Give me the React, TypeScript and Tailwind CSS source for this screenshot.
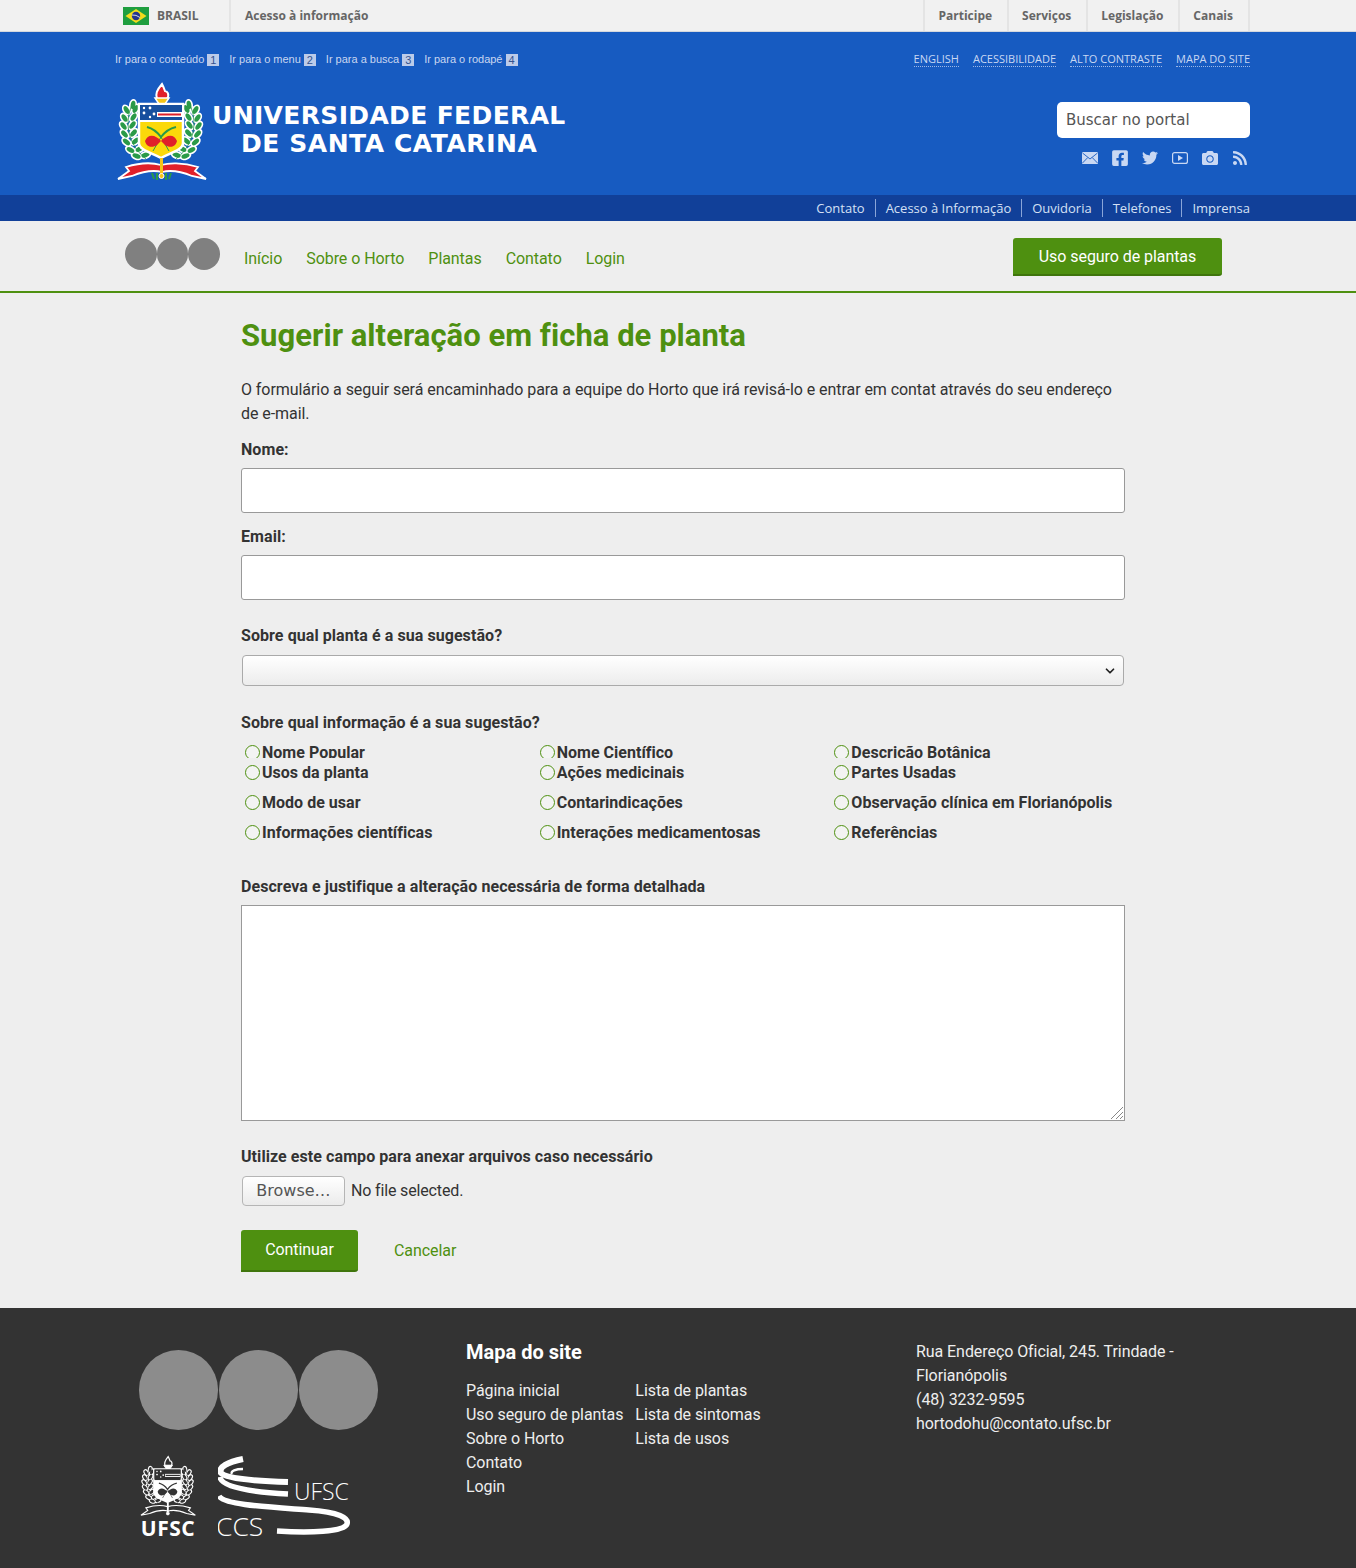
import { FaCamera, FaFacebookSquare, FaRss, FaTwitter } from "react-icons/fa";
import { FiChevronDown } from "react-icons/fi";

const roboto = "font-['Roboto',sans-serif]";
const openSans = "font-['Open_Sans',sans-serif]";

const skipLinks = [
  ["Ir para o conteúdo", "1"],
  ["Ir para o menu", "2"],
  ["Ir para a busca", "3"],
  ["Ir para o rodapé", "4"],
];

const radios = [
  "Nome Popular",
  "Nome Científico",
  "Descricão Botânica",
  "Usos da planta",
  "Ações medicinais",
  "Partes Usadas",
  "Modo de usar",
  "Contarindicações",
  "Observação clínica em Florianópolis",
  "Informações científicas",
  "Interações medicamentosas",
  "Referências",
];

function Flag() {
  return (
    <svg width="26" height="18" viewBox="0 0 26 18">
      <rect width="26" height="18" fill="#1f9e3f" />
      <path d="M13 2 L23.5 9 L13 16 L2.5 9 Z" fill="#f4dc1c" />
      <circle cx="13" cy="9" r="4.2" fill="#24358c" />
      <path d="M9 8 Q13 7.5 17 10.5" stroke="#fff" strokeWidth="0.8" fill="none" />
    </svg>
  );
}

// stem points of the left wreath, the right one is mirrored
const stem = [
  [21, 35, 30],
  [19, 43, 32],
  [18, 51, 36],
  [19, 59, 42],
  [21, 67, 50],
  [25, 75, 60],
  [31, 81, 70],
];

function Wreath({ leaf, flip }: { leaf: string; flip?: boolean }) {
  const leaves: number[][] = [[23, 30, 10]];
  stem.forEach(([x, y, r]) => {
    leaves.push([x - 4.5, y, -r]);
    leaves.push([x + 4.5, y - 1, r]);
  });
  return (
    <g transform={flip ? "translate(102 0) scale(-1 1)" : undefined}>
      {leaves.map(([x, y, r]) => (
        <ellipse key={`w${x}-${y}`} cx={x} cy={y} rx="4" ry="6" fill="#fff" transform={`rotate(${r} ${x} ${y})`} />
      ))}
      <path d="M22 30 C15 45 16 68 36 84" stroke={leaf} strokeWidth="0.8" fill="none" />
      {leaves.map(([x, y, r]) => (
        <ellipse key={`l${x}-${y}`} cx={x} cy={y} rx="2.3" ry="4.2" fill={leaf} transform={`rotate(${r} ${x} ${y})`} />
      ))}
    </g>
  );
}

function Crest({ mono, size = 110 }: { mono?: boolean; size?: number }) {
  const green = mono ? "#333" : "#2a9a48";
  const blue = mono ? "#333" : "#174f9e";
  const yellow = mono ? "#fff" : "#fbd90a";
  const red = mono ? "#333" : "#e0202a";
  return (
    <svg width={size} height={size} viewBox="0 0 110 110">
      <Wreath leaf={green} />
      <Wreath leaf={green} flip />
      {/* torch */}
      <path d="M52 9 C47 15 45 19 47 24 L57 24 C60 19 57 16 55 16 C54 13 53 11 52 9 Z" fill={red} stroke="#fff" strokeWidth="2" />
      <path d="M45 23 L59 23 L55 29 L49 29 Z" fill={mono ? "#fff" : "#f5c518"} stroke="#fff" strokeWidth="1.5" />
      {/* shield */}
      <path d="M29 29 L73 29 L73 68 C73 75 60 78 51 83 C42 78 29 75 29 68 Z" fill={yellow} stroke="#fff" strokeWidth="2.5" />
      <rect x="30" y="30" width="42" height="17" fill={mono ? "#333" : "#fff"} />
      <rect x="30" y="30" width="42" height="15" fill={blue} />
      <rect x="47" y="37" width="25" height="5" fill="#fff" />
      <rect x="48" y="38.5" width="23" height="2" fill={red} />
      <circle cx="34" cy="38" r="1.4" fill="#fff" />
      <circle cx="40" cy="33" r="1.4" fill="#fff" />
      <circle cx="34" cy="33" r="1.2" fill="#fff" />
      <circle cx="44" cy="39" r="1.4" fill="#fff" />
      <circle cx="40" cy="42" r="1.2" fill="#fff" />
      {/* arms */}
      <path d="M37 52 Q45 54 51 62 Q57 54 66 52" stroke={green} strokeWidth="2" fill="none" />
      <path d="M51 62 L43 76 M51 62 L59 76" stroke={green} strokeWidth="1" fill="none" />
      <path d="M35 66 C38 58 46 60 51 66 C56 60 64 58 67 66 C65 74 58 72 55 70 L51 66 L47 70 C44 72 37 74 35 66 Z" fill={red} />
      {/* ribbon */}
      <path d="M8 104 L19 96 L16 92 C32 87 44 88 51 90 C58 88 72 87 88 92 L85 96 L96 104 L82 101 C70 96 60 95 52 97 C44 95 34 96 22 101 Z" fill={red} stroke="#fff" strokeWidth="1.8" />
      <rect x="50" y="83" width="3" height="16" fill={mono ? "#fff" : "#f5c518"} />
      <circle cx="51.5" cy="101" r="2.5" fill={mono ? "#fff" : "#f5c518"} stroke="#fff" />
      <path d="M42 98 L44 104 M47 98 L47 105 M56 98 L56 105 M61 98 L59 104" stroke={green} strokeWidth="2" />
    </svg>
  );
}

function MailIcon() {
  return (
    <svg width="16" height="12" viewBox="0 0 16 12" fill="none">
      <rect width="16" height="12" rx="1" fill="#c9d8f3" />
      <path d="M0.5 1 L8 7 L15.5 1 M0.5 11 L5.8 5.5 M15.5 11 L10.2 5.5" stroke="#175bc1" strokeWidth="0.9" />
    </svg>
  );
}

function PlayIcon() {
  return (
    <svg width="16" height="12" viewBox="0 0 16 12" fill="none">
      <rect x="0.6" y="0.6" width="14.8" height="10.8" rx="2" stroke="#c9d8f3" strokeWidth="1.2" />
      <path d="M6 3 L11 6 L6 9 Z" fill="#c9d8f3" />
    </svg>
  );
}

function FormLabel({ children }: { children: React.ReactNode }) {
  return <div className="text-[16px] leading-6 font-bold text-[#333] tracking-[0.07px]">{children}</div>;
}

function FooterLogo() {
  return (
    <div className="flex items-start mt-[21px] -ml-px">
      <div className="w-[64px] flex flex-col items-center">
        <Crest mono size={68} />
        <span className="-mt-[2px] -ml-[4px] text-white text-[21px] leading-[22px] font-bold font-['Open_Sans',sans-serif] tracking-[0.5px]">UFSC</span>
      </div>
      <svg width="150" height="84" viewBox="0 0 150 84" className="ml-[16px] mt-[5px]" fill="none" stroke="#fff">
        <path d="M25 3 C10 6 0 11 3 17 C7 22 33 25 70 26" strokeWidth="6" />
        <path d="M25 13 C18 13 12 15 14 18" strokeWidth="2.5" />
        <path d="M2 21 C3 31 31 36 70 38" strokeWidth="5.5" />
        <path d="M1 40 C6 49 51 51 91 54 C121 56 131 62 129 68 C126 76 91 77 59 75" strokeWidth="5.5" />
        <text x="76" y="44" fill="#fff" stroke="none" fontSize="23" fontWeight="300" fontFamily="Open Sans, sans-serif">UFSC</text>
        <text x="-2" y="80" fill="#fff" stroke="none" fontSize="26.5" fontWeight="300" fontFamily="Open Sans, sans-serif">CCS</text>
      </svg>
    </div>
  );
}

export default function App() {
  return (
    <div className={`${roboto} bg-[#eeeeee] text-[#333] w-full tracking-[-0.065px]`}>
      {/* barra brasil */}
      <div className={`${openSans} h-[32px] bg-[#f1f1f1] border-b border-[#d4d8de] text-[12px] font-bold text-[#666] tracking-normal`}>
        <div className="flex h-full items-stretch pl-[123px] pr-[106px]">
          <div className="flex items-center w-[108px] border-r-2 border-[#e4e4e4]">
            <Flag />
            <span className="ml-2">BRASIL</span>
          </div>
          <span className="ml-[14px] flex items-center">Acesso à informação</span>
          <div className="ml-auto flex border-r-2 border-[#e4e4e4]">
            {["Participe", "Serviços", "Legislação", "Canais"].map((t) => (
              <span key={t} className="flex items-center pl-[13px] pr-[15px] border-l-2 border-[#e4e4e4]">
                {t}
              </span>
            ))}
          </div>
        </div>
      </div>

      {/* header azul */}
      <div className="h-[163px] bg-[#175bc1] tracking-normal">
        <div className="pl-[115px] pr-[106px]">
          <div className="flex items-center justify-between pt-[15px] h-[40px]">
            <div className="flex gap-[10px] font-['Liberation_Sans',sans-serif] text-[11px] text-[#c9d6f0]">
              {skipLinks.map(([label, n]) => (
                <span key={n} className="flex items-center gap-[3px]">
                  {label}
                  <span className="bg-[#bccbe9] text-[#34528e] w-[12px] h-[12px] leading-[12px] text-center">{n}</span>
                </span>
              ))}
            </div>
            <div className={`${openSans} flex gap-[14px] text-[11px] text-[#c9d8f3]`}>
              {["ENGLISH", "ACESSIBILIDADE", "ALTO CONTRASTE", "MAPA DO SITE"].map((t) => (
                <span key={t} className="border-b border-dotted border-[#9db8e6] leading-[14px]">
                  {t}
                </span>
              ))}
            </div>
          </div>
          <div className="flex justify-between">
            <div className="flex -ml-[5px] mt-[3px]">
              <Crest />
              <div className="ml-[-8px] mt-[27px] font-['DejaVu_Sans',sans-serif] font-bold text-white text-[25px] leading-[28px]">
                <div className="tracking-[0.35px]">UNIVERSIDADE FEDERAL</div>
                <div className="pl-[29px] tracking-[0.55px]">DE SANTA CATARINA</div>
              </div>
            </div>
            <div className="flex flex-col items-end mt-[30px]">
              <div className="w-[193px] h-[36px] bg-white rounded-[5px] pl-[9px] font-['DejaVu_Sans',sans-serif] text-[15px] leading-[36px] text-[#555]">
                Buscar no portal
              </div>
              <div className="flex items-center gap-[14px] mt-[12px] text-[#c9d8f3] pr-[2px] h-[16px]">
                <span className="w-4 flex justify-center"><MailIcon /></span>
                <span className="w-4 flex justify-center"><FaFacebookSquare size={18} /></span>
                <span className="w-4 flex justify-center"><FaTwitter size={16} /></span>
                <span className="w-4 flex justify-center"><PlayIcon /></span>
                <span className="w-4 flex justify-center"><FaCamera size={16} /></span>
                <span className="w-4 flex justify-center"><FaRss size={16} /></span>
              </div>
            </div>
          </div>
        </div>
      </div>

      {/* servicos */}
      <div className={`${openSans} h-[26px] bg-[#114099] flex items-center justify-end pr-[106px] text-[13px] text-[#d5e0f5] tracking-normal`}>
        {["Contato", "Acesso à Informação", "Ouvidoria", "Telefones", "Imprensa"].map((t, i) => (
          <span key={t} className={`leading-[18px] ${i > 0 ? "ml-[10px] pl-[10px] border-l border-[#8aa5d8]" : ""}`}>
            {t}
          </span>
        ))}
      </div>

      {/* nav */}
      <div className="h-[72px] border-b-2 border-[#4e9010] flex items-center pl-[125px] pr-[134px] text-[16px] text-[#4e9010]">
        <div className="flex mt-[-4px]">
          <div className="w-[31.7px] h-8 rounded-full bg-[#808080]" />
          <div className="w-[31.7px] h-8 rounded-full bg-[#808080]" />
          <div className="w-[31.7px] h-8 rounded-full bg-[#808080]" />
        </div>
        <div className="flex gap-6 ml-6 mt-[6px]">
          {["Início", "Sobre o Horto", "Plantas", "Contato", "Login"].map((t) => (
            <span key={t}>{t}</span>
          ))}
        </div>
        <div className="ml-auto mt-[2px] w-[209px] h-[38px] bg-[#4e9010] border-b-2 border-[#3f750c] rounded-[3px] rounded-bl-none text-white text-center leading-[38px]">
          Uso seguro de plantas
        </div>
      </div>

      {/* form */}
      <div className="pl-[241px] w-[1125px] box-content pb-[36px]">
        <h1 className="text-[31px] leading-[36px] font-bold text-[#4e9010] pt-[25px] tracking-[0.03px]">
          Sugerir alteração em ficha de planta
        </h1>
        <p className="mt-[24px] text-[16px] leading-6 w-[884px]">
          O formulário a seguir será encaminhado para a equipe do Horto que irá revisá-lo e entrar em contat através do seu endereço de e-mail.
        </p>

        <div className="mt-[12px]">
          <FormLabel>Nome:</FormLabel>
          <div className="mt-[6px] w-[884px] h-[45px] bg-white border border-[#999] rounded-[3px]" />
        </div>
        <div className="mt-[12px]">
          <FormLabel>Email:</FormLabel>
          <div className="mt-[6px] w-[884px] h-[45px] bg-white border border-[#999] rounded-[3px]" />
        </div>

        <div className="mt-[24px]">
          <FormLabel>Sobre qual planta é a sua sugestão?</FormLabel>
          <div className="mt-[7px] ml-px w-[882px] h-[31px] border border-[#aaa] rounded-[4px] bg-gradient-to-b from-white to-[#ececec] flex items-center justify-end pr-[6px] text-[#222]">
            <FiChevronDown size={14} strokeWidth={3} />
          </div>
        </div>

        <div className="mt-[25px]">
          <FormLabel>Sobre qual informação é a sua sugestão?</FormLabel>
          <div className="mt-[8px] grid grid-cols-3 w-[884px] font-bold text-[16px] leading-5 gap-y-[10px] tracking-[0.02px]">
            {radios.map((t, i) => (
              <div key={t} className={`flex pl-[4px] ${i < 3 ? "h-[15px] overflow-hidden mb-[-5px]" : ""}`}>
                <span className="w-[15px] h-[15px] rounded-full border-[1.5px] border-[#4e9010] bg-[#f3f3f3] mt-[2px] mr-[2px] shrink-0" />
                <span>{t}</span>
              </div>
            ))}
          </div>
        </div>

        <div className="mt-[32px]">
          <FormLabel>Descreva e justifique a alteração necessária de forma detalhada</FormLabel>
          <div className="relative mt-[6px] w-[884px] h-[216px] bg-white border border-[#999]">
            <svg width="14" height="14" viewBox="0 0 14 14" className="absolute right-0 bottom-0" stroke="#888" fill="none">
              <path d="M13 1 L1 13 M13 6 L6 13 M13 10 L10 13" />
            </svg>
          </div>
        </div>

        <div className="mt-[24px]">
          <FormLabel>Utilize este campo para anexar arquivos caso necessário</FormLabel>
          <div className="flex items-center mt-[7px] ml-px">
            <div className="w-[103px] h-[30px] border border-[#b5b5b5] rounded-[4px] bg-gradient-to-b from-white to-[#ebebeb] text-center font-['DejaVu_Sans',sans-serif] text-[16px] leading-[28px] text-[#555] tracking-normal">
              Browse…
            </div>
            <span className="ml-[6px] tracking-[-0.15px]">No file selected.</span>
          </div>
        </div>

        <div className="flex items-center mt-[24px]">
          <div className="w-[117px] h-[42px] bg-[#4e9010] border-b-2 border-[#3f750c] rounded-[3px] rounded-bl-none text-white text-center leading-[40px]">
            Continuar
          </div>
          <span className="ml-[36px] text-[#4e9010]">Cancelar</span>
        </div>
      </div>

      {/* footer */}
      <div className="h-[260px] bg-[#333333] flex pl-[139px] text-[16px] leading-6 text-[#eeeeee]">
        <div className="w-[327px] pt-[42px]">
          <div className="flex gap-px">
            <div className="w-[79px] h-[80px] rounded-full bg-[#8c8c8c]" />
            <div className="w-[79px] h-[80px] rounded-full bg-[#8c8c8c]" />
            <div className="w-[79px] h-[80px] rounded-full bg-[#8c8c8c]" />
          </div>
          <FooterLogo />
        </div>
        <div className="w-[450px] pt-[30px]">
          <div className="text-[20px] leading-[28px] font-bold text-white tracking-normal">Mapa do site</div>
          <div className="flex gap-3 mt-[13px]">
            <div className="flex flex-col">
              {["Página inicial", "Uso seguro de plantas", "Sobre o Horto", "Contato", "Login"].map((t) => (
                <span key={t}>{t}</span>
              ))}
            </div>
            <div className="flex flex-col">
              {["Lista de plantas", "Lista de sintomas", "Lista de usos"].map((t) => (
                <span key={t}>{t}</span>
              ))}
            </div>
          </div>
        </div>
        <div className="w-[280px] pt-[32px]">
          <div>Rua Endereço Oficial, 245. Trindade - Florianópolis</div>
          <div>(48) 3232-9595</div>
          <div>hortodohu@contato.ufsc.br</div>
        </div>
      </div>
    </div>
  );
}
